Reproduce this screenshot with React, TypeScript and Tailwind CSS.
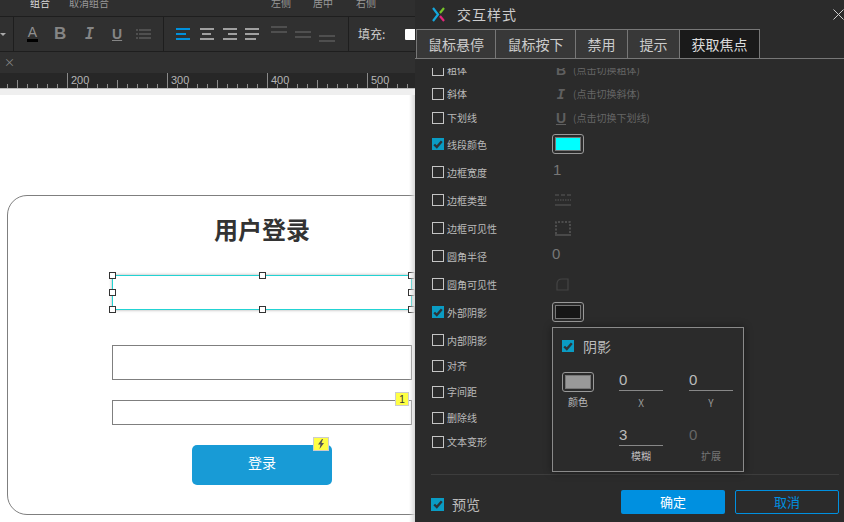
import React from 'react';

const CJK = "font-['Noto_Sans_CJK_SC','Noto_Sans',sans-serif]";

const Check: React.FC<{ on?: boolean; big?: boolean; className?: string }> = ({ on, big, className = '' }) =>
  on ? (
    <span className={`flex shrink-0 items-center justify-center bg-[#0a9cc4] ${big ? 'h-[13px] w-[13px]' : 'h-3 w-3'} ${className}`}>
      <svg width="10" height="9" viewBox="0 0 10 9" fill="none">
        <path d="M1.2 4.5 L3.8 7 L8.8 1.2" stroke="#2d3438" strokeWidth="2.4" />
      </svg>
    </span>
  ) : (
    <span className={`h-3 w-3 shrink-0 border border-[#c4c4c4] ${className}`} />
  );

const Swatch: React.FC<{ color: string }> = ({ color }) => (
  <span className="flex h-5 w-8 items-center justify-center rounded-[3px] border border-[#999]">
    <span className="h-[14px] w-[26px] border border-[#777]" style={{ background: color }} />
  </span>
);

interface RowItem {
  label: string;
  h: string;
  on?: boolean;
  up?: boolean;
  hint?: string;
  extra?: React.ReactNode;
}

const BorderTypeIcon = (
  <svg width="16" height="12" viewBox="0 0 16 12" fill="none" stroke="#5a5a5a">
    <path d="M0 1 H16" strokeDasharray="4 2" />
    <path d="M0 6 H16" strokeDasharray="1.5 1" />
    <path d="M0 11 H16" />
  </svg>
);

const rows: RowItem[] = [
  { label: '斜体', h: 'h-6', up: true, hint: '(点击切换斜体)', extra: <span className="ml-[3px] w-3 text-center font-['DejaVu_Sans_Mono'] text-[14px] font-bold italic text-[#5f5f5f]">I</span> },
  { label: '下划线', h: 'h-6', up: true, hint: '(点击切换下划线)', extra: <span className="ml-[3px] w-3 text-center font-['Liberation_Sans'] text-[14px] font-bold text-[#5f5f5f] underline">U</span> },
  { label: '线段颜色', h: 'h-7', on: true, extra: <Swatch color="#00ffff" /> },
  { label: '边框宽度', h: 'h-7', extra: <span className="-mt-1 ml-[1px] font-['Liberation_Sans'] text-[15px] text-[#777]">1</span> },
  { label: '边框类型', h: 'h-7', extra: <span className="ml-[3px]">{BorderTypeIcon}</span> },
  {
    label: '边框可见性',
    h: 'h-7',
    extra: (
      <svg className="ml-[3px]" width="16" height="15" viewBox="0 0 16 15" fill="none">
        <path d="M1 13 V1 H15 V13" stroke="#5a5a5a" strokeDasharray="2 1.5" strokeWidth="1.5" />
        <path d="M0 14 H16" stroke="#555" strokeWidth="1.5" />
      </svg>
    ),
  },
  { label: '圆角半径', h: 'h-7', extra: <span className="-mt-1 font-['Liberation_Sans'] text-[15px] text-[#777]">0</span> },
  {
    label: '圆角可见性',
    h: 'h-7',
    extra: (
      <svg className="ml-1" width="13" height="13" viewBox="0 0 13 13" fill="none" stroke="#444" strokeWidth="1.2">
        <path d="M1 12 V6 Q1 1 6 1 H12 V12 Z" />
      </svg>
    ),
  },
  { label: '外部阴影', h: 'h-7', on: true, extra: <Swatch color="#161616" /> },
  { label: '内部阴影', h: 'h-7' },
  { label: '对齐', h: 'h-6', up: true },
  { label: '字间距', h: 'h-7', up: true },
  { label: '删除线', h: 'h-6', up: true },
  { label: '文本变形', h: 'h-6', up: true },
];

const tabs = ['鼠标悬停', '鼠标按下', '禁用', '提示'];

const Handle: React.FC<{ className: string }> = ({ className }) => (
  <span className={`absolute h-[7px] w-[7px] border border-[#333] bg-white ${className}`} />
);

const RulerTicks = () => {
  const ticks = [];
  for (let x = 7; x < 415; x += 10) {
    const major = (x - 67) % 100 === 0;
    const mid = (x - 67) % 50 === 0;
    ticks.push(<path key={x} d={`M${x + 0.5} ${major ? 0 : mid ? 7 : 11} V15`} stroke="#8a8a8a" />);
  }
  return (
    <svg className="absolute inset-0" width="415" height="15">
      {ticks}
    </svg>
  );
};

const AlignIcon: React.FC<{ rows: number[]; color?: string; align?: string }> = ({ rows: widths, color = '#a0a0a0', align = 'items-start' }) => (
  <span className={`flex w-[15px] flex-col gap-[3px] ${align}`}>
    {widths.map((w, i) => (
      <span key={i} className="h-[2px]" style={{ width: w, background: color }} />
    ))}
  </span>
);

export default function App() {
  return (
    <div className={`flex h-[522px] w-[844px] overflow-hidden bg-[#2b2b2b] ${CJK}`}>
      {/* editor side */}
      <div className="relative flex w-[415px] shrink-0 flex-col overflow-hidden">
        <div className="relative h-[17px] overflow-hidden border-b border-[#1e1e1e] bg-[#2f2f2f] text-[10px] text-[#999]">
          <div className="-mt-[8px] flex h-5 items-center">
            <span className="ml-[30px] text-[#ddd]">组合</span>
            <span className="ml-[19px]">取消组合</span>
            <span className="ml-[162px]">左侧</span>
            <span className="ml-[22px]">居中</span>
            <span className="ml-[23px]">右侧</span>
          </div>
        </div>
        <div className="flex h-[35px] items-center overflow-hidden border-b border-[#1e1e1e] bg-[#303030]">
          <div className="flex h-full w-[14px] shrink-0 items-center border-r border-[#1e1e1e]">
            <span className="h-0 w-0 border-x-[3px] border-t-[3px] border-x-transparent border-t-[#aaa]" />
          </div>
          <div className="flex h-full w-[150px] shrink-0 items-center border-r border-[#1e1e1e] pl-[13px]">
            <span className="mr-[16px] flex w-[11px] flex-col items-center self-center font-['Liberation_Sans'] text-[14px] leading-[12px] text-[#8f8f8f]">
              A
              <span className="mt-[1px] h-[3px] w-[11px] shrink-0 bg-black" />
            </span>
            <span className="w-[31px] font-['Liberation_Sans'] text-[17px] font-bold text-[#858585]">B</span>
            <span className="w-[27px] font-['DejaVu_Sans_Mono'] text-[15px] font-bold italic text-[#858585]">I</span>
            <span className="w-[24px] font-['Liberation_Sans'] text-[14px] font-bold text-[#858585] underline">U</span>
            <span className="flex items-center gap-[1px]">
              <span className="flex flex-col gap-[2px]">
                <span className="h-[2px] w-[2px] bg-[#4f4f4f]" />
                <span className="h-[2px] w-[2px] bg-[#4f4f4f]" />
                <span className="h-[2px] w-[2px] bg-[#4f4f4f]" />
              </span>
              <span className="flex flex-col gap-[2px]">
                <span className="h-[2px] w-[12px] bg-[#4f4f4f]" />
                <span className="h-[2px] w-[12px] bg-[#4f4f4f]" />
                <span className="h-[2px] w-[12px] bg-[#4f4f4f]" />
              </span>
            </span>
          </div>
          <div className="flex h-full w-[185px] shrink-0 items-center gap-[8px] border-r border-[#1e1e1e] pl-[12px]">
            <AlignIcon rows={[14, 10, 14]} color="#0090dc" />
            <AlignIcon rows={[14, 9, 14]} align="items-center" />
            <AlignIcon rows={[14, 9, 14]} align="items-end" />
            <AlignIcon rows={[14, 14, 11]} />
            <span className="-mt-[9px] ml-[3px] flex w-4 flex-col gap-[3px]">
              <span className="h-[2px] bg-[#4f4f4f]" />
              <span className="h-[2px] bg-[#4f4f4f]" />
            </span>
            <span className="flex w-4 flex-col gap-[3px]">
              <span className="h-[2px] bg-[#4f4f4f]" />
              <span className="h-[2px] bg-[#4f4f4f]" />
            </span>
            <span className="mt-[9px] flex w-4 flex-col gap-[3px]">
              <span className="h-[2px] bg-[#4f4f4f]" />
              <span className="h-[2px] bg-[#4f4f4f]" />
            </span>
          </div>
          <span className="ml-[9px] shrink-0 text-[12px] whitespace-nowrap text-[#ccc]">填充:</span>
          <span className="ml-[20px] h-[11px] w-[10px] shrink-0 rounded-l-[1px] bg-white" />
        </div>
        <div className="flex h-[21px] items-center bg-[#303030] pl-[4px] text-[11px] text-[#888]">×</div>
        <div className="relative h-[15px] bg-[#272727]">
          <RulerTicks />
          {[
            ['200', 'ml-[71px]'],
            ['300', 'ml-[171px]'],
            ['400', 'ml-[271px]'],
            ['500', 'ml-[371px]'],
          ].map(([n, pos]) => (
            <span key={n} className={`absolute top-0 left-0 font-['Liberation_Sans'] text-[11px] leading-[14px] text-[#b5b5b5] ${pos}`}>
              {n}
            </span>
          ))}
        </div>
        <div className="h-[7px] border-t border-[#bbb] bg-[#efefef]" />
        {/* canvas */}
        <div className="flex-1 bg-white pt-[100px] pl-[7px]">
          <div className="h-[320px] w-[440px] rounded-[20px] border border-[#7f7f7f] pl-[104px]">
            <div className="w-[300px] pt-[15px] text-center text-[24px] leading-[36px] font-bold text-[#333]">用户登录</div>
            <div className="relative mt-[28px] h-[35px] w-[300px] border border-[#22d3d3] shadow-[0_0_3px_#aaa]">
              <Handle className="-left-[4px] -top-[4px]" />
              <Handle className="left-[146px] -top-[4px]" />
              <Handle className="-right-[4px] -top-[4px]" />
              <Handle className="-left-[4px] top-[13px]" />
              <Handle className="-right-[4px] top-[13px]" />
              <Handle className="-left-[4px] -bottom-[4px]" />
              <Handle className="left-[146px] -bottom-[4px]" />
              <Handle className="-right-[4px] -bottom-[4px]" />
            </div>
            <div className="mt-[35px] h-[35px] w-[300px] border border-[#7f7f7f]" />
            <div className="relative mt-[20px] h-[25px] w-[300px] border border-[#7f7f7f]">
              <span className="absolute -top-[9px] right-[2px] flex h-[14px] w-[14px] items-center justify-center border border-[#ccc] bg-[#ffff44] font-['Liberation_Sans'] text-[10px] text-[#333]">1</span>
            </div>
            <div className="relative mt-[20px] ml-[80px] flex h-[40px] w-[140px] items-center justify-center rounded-[5px] bg-[#189bd6] pb-[5px] text-[14px] text-white">
              登录
              <span className="absolute -top-[8px] right-[3px] flex h-[14px] w-[16px] items-center justify-center border border-[#ccc] bg-[#ffff44]">
                <svg width="8" height="10" viewBox="0 0 8 10">
                  <path d="M5 0 L1 5.5 H3.5 L2.5 10 L7 4 H4.5 L6 0 Z" fill="#555" />
                </svg>
              </span>
            </div>
          </div>
        </div>
        <div className="absolute top-[95px] right-0 bottom-0 w-[6px] bg-gradient-to-r from-transparent to-[#d8d8d8]" />
      </div>

      {/* interaction style panel */}
      <div className="relative flex w-[429px] shrink-0 flex-col bg-[#2b2b2b]">
        <div className="flex h-[29px] items-center pb-[1px] pl-[17px]">
          <svg width="13" height="15" viewBox="0 0 13 15" fill="none" strokeWidth="2.2">
            <path d="M1 1 L6 7.5 L1 14" stroke="#14a7dc" />
            <path d="M12 1 L8 6" stroke="#76c52a" />
            <path d="M8 9 L12 14" stroke="#e3257b" />
          </svg>
          <span className="ml-[12px] text-[14px] tracking-[1px] text-[#ccc]">交互样式</span>
          <svg className="absolute top-[9px] right-0" width="11" height="11" viewBox="0 0 11 11" stroke="#ccc">
            <path d="M0.5 0.5 L10.5 10.5 M10.5 0.5 L0.5 10.5" />
          </svg>
        </div>
        <div className="flex h-[30px] border-b border-[#777] pl-px">
          {tabs.map((t, i) => (
            <div
              key={t}
              className={`flex h-[29px] items-center justify-center border-t border-r border-[#777] bg-[#383838] text-[14px] text-[#ccc] ${
                i === 0 ? 'w-[80px] border-l' : i === 1 ? 'w-[80px]' : 'w-[52px]'
              }`}
            >
              {t}
            </div>
          ))}
          <div className="flex h-[29px] w-[80px] items-center justify-center border-t border-r border-[#777] bg-[#1a1a1a] text-[14px] text-[#ddd]">获取焦点</div>
        </div>
        <div className="mr-[5px] ml-[16px] h-[416px] border-b border-[#3d3d3d] pt-[9px] pl-px">
          <div className="h-[14px] overflow-hidden">
            <div className="-mt-[10px] flex h-6 items-center text-[10px] text-[#bbb]">
              <Check />
              <span className="ml-[3px] -mt-[2px] w-[105px]">粗体</span>
              <span className="ml-[3px] w-3 text-center font-['Liberation_Sans'] text-[14px] font-bold text-[#5f5f5f]">B</span>
              <span className="ml-[6px] -mt-[2px] text-[10px] text-[#666]">(点击切换粗体)</span>
            </div>
          </div>
          {rows.map((r) => (
            <div key={r.label} className={`flex items-center text-[10px] text-[#bbb] ${r.h}`}>
              <Check on={r.on} />
              <span className={`ml-[3px] w-[105px] ${r.up ? '-mt-[2px]' : ''}`}>{r.label}</span>
              {r.extra}
              {r.hint && <span className="ml-[6px] -mt-[2px] text-[10px] text-[#666]">{r.hint}</span>}
            </div>
          ))}
        </div>
        <div className="flex flex-1 items-center pt-[6px] pr-[5px] pl-[16px]">
          <Check on big className="mt-[6px]" />
          <span className="mt-[6px] ml-[8px] text-[14px] text-[#bbb]">预览</span>
          <button className="ml-auto h-6 w-[104px] rounded-[2px] bg-[#0090e0] text-[13px] text-white">确定</button>
          <button className="ml-[10px] h-6 w-[104px] rounded-[2px] border border-[#0090e0] text-[13px] text-[#0090e0]">取消</button>
        </div>

        {/* shadow popup */}
        <div className="absolute top-[327px] left-[137px] h-[145px] w-[192px] border border-[#8a8a8a] bg-[#2b2b2b] shadow-[0_0_8px_rgba(0,0,0,0.4)]">
          <div className="flex h-[36px] items-center pl-[9px]">
            <Check on />
            <span className="ml-[9px] text-[14px] text-[#bbb]">阴影</span>
          </div>
          <div className="grid grid-cols-[57px_44px_26px_44px] pt-[6px] pl-[9px] text-center">
            <div className="mt-[2px] flex flex-col items-start">
              <Swatch color="#999999" />
              <span className="mt-[2px] w-8 text-[10px] text-[#bbb]">颜色</span>
            </div>
            <div>
              <div className="h-[21px] border-b border-[#888] text-left font-['Liberation_Sans'] text-[15px] leading-[20px] text-[#bbb]">0</div>
              <div className="mt-[4px] text-[10px] text-[#999]">X</div>
            </div>
            <div />
            <div>
              <div className="h-[21px] border-b border-[#888] text-left font-['Liberation_Sans'] text-[15px] leading-[20px] text-[#bbb]">0</div>
              <div className="mt-[4px] text-[10px] text-[#999]">Y</div>
            </div>
            <div className="mt-[15px]" />
            <div className="mt-[15px]">
              <div className="h-[21px] border-b border-[#888] text-left font-['Liberation_Sans'] text-[15px] leading-[20px] text-[#bbb]">3</div>
              <div className="mt-[2px] text-[10px] text-[#bbb]">模糊</div>
            </div>
            <div className="mt-[15px]" />
            <div className="mt-[15px]">
              <div className="h-[21px] text-left font-['Liberation_Sans'] text-[15px] leading-[20px] text-[#666]">0</div>
              <div className="mt-[2px] text-[10px] text-[#777]">扩展</div>
            </div>
          </div>
        </div>
      </div>
    </div>
  );
}
